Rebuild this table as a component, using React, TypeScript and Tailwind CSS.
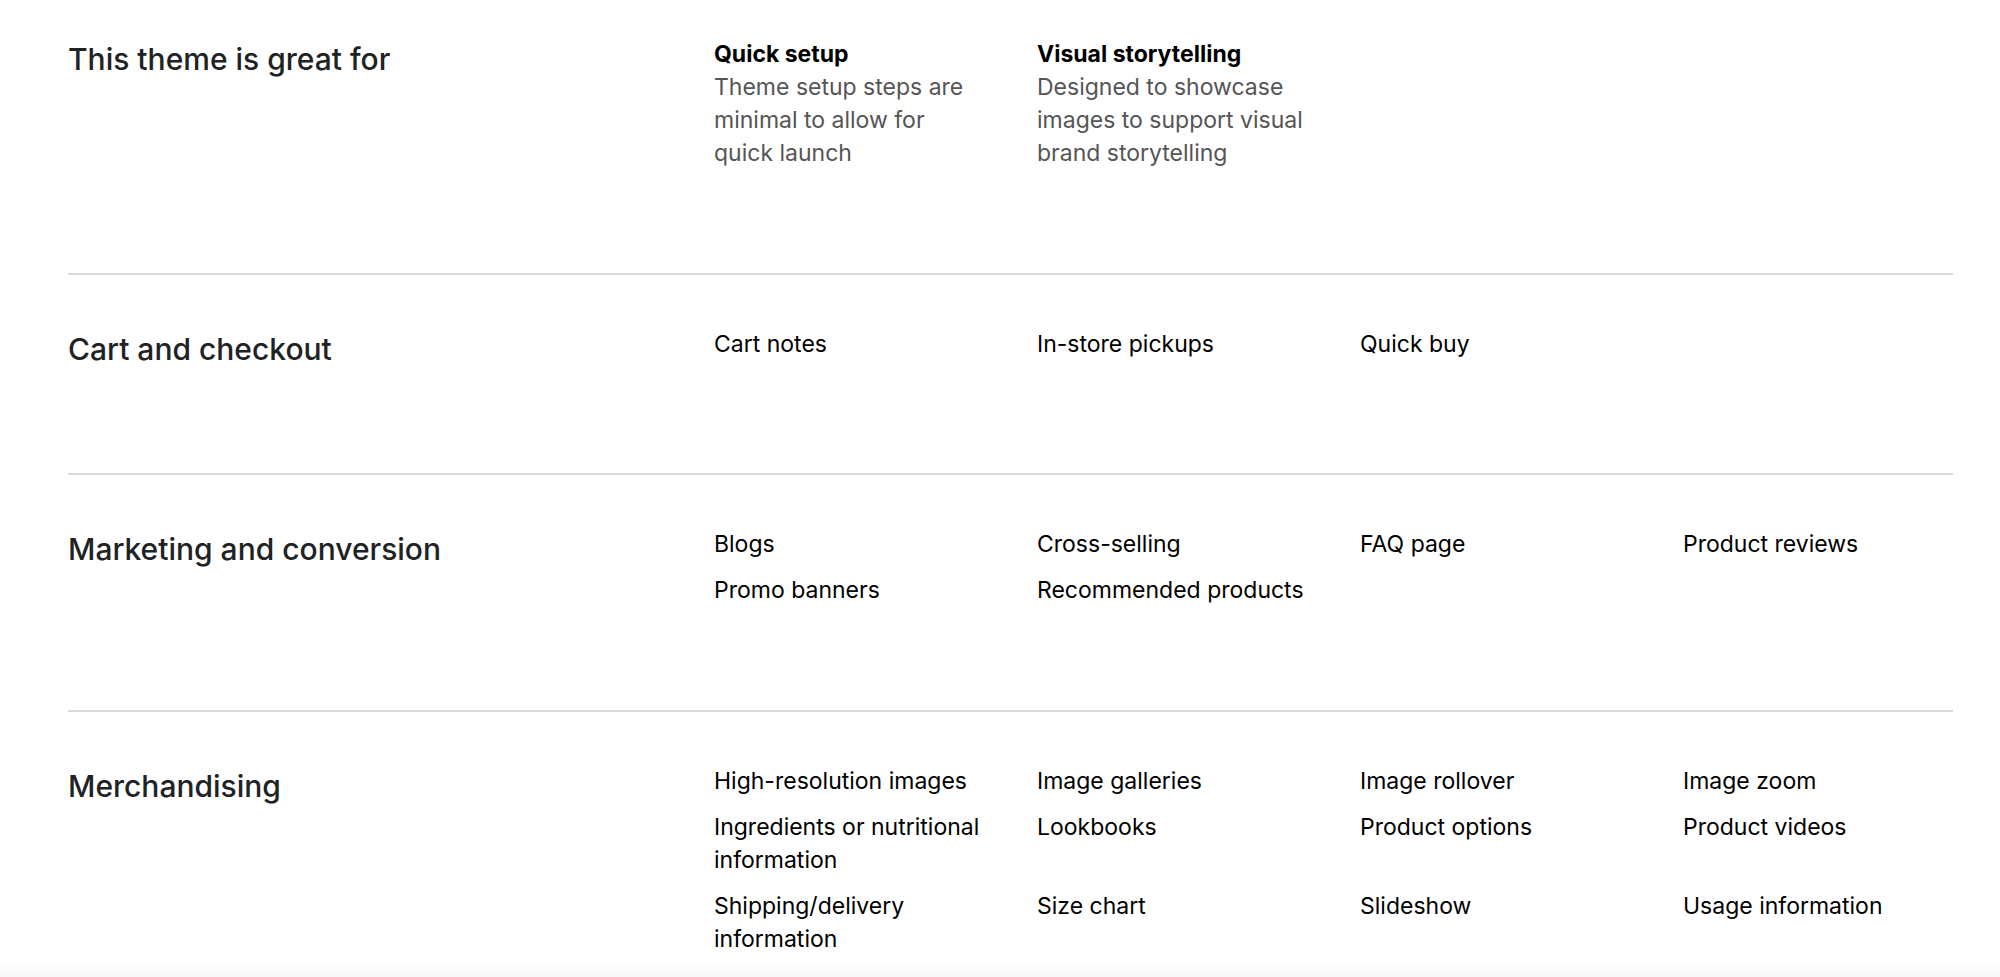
const highlights = [
  { title: 'Quick setup', text: 'Theme setup steps are minimal to allow for quick launch' },
  { title: 'Visual storytelling', text: 'Designed to showcase images to support visual brand storytelling' },
];

const sections = [
  { name: 'Cart and checkout', items: ['Cart notes', 'In-store pickups', 'Quick buy'] },
  {
    name: 'Marketing and conversion',
    items: ['Blogs', 'Cross-selling', 'FAQ page', 'Product reviews', 'Promo banners', 'Recommended products'],
  },
  {
    name: 'Merchandising',
    items: [
      'High-resolution images',
      'Image galleries',
      'Image rollover',
      'Image zoom',
      'Ingredients or nutritional information',
      'Lookbooks',
      'Product options',
      'Product videos',
      'Shipping/delivery information',
      'Size chart',
      'Slideshow',
      'Usage information',
    ],
  },
];

export default function App() {
  return (
    <div className="relative h-[977px] overflow-hidden bg-white font-['Inter','Liberation_Sans',sans-serif] antialiased">
      <div className="pl-[68px] pr-[47px]">
        {/* Great for */}
        <div className="flex border-b-2 border-[#d9d9d9] pt-[38px] pb-[103px]">
          <h2 className="w-[646px] shrink-0 text-[30px] font-medium leading-[42px] text-[#202223]">
            This theme is great for
          </h2>
          <div className="grid grid-cols-[repeat(4,276px)] gap-x-[47px]">
            {highlights.map((h) => (
              <div key={h.title} className="text-[23px] leading-[33px]">
                <h3 className="font-bold text-black">{h.title}</h3>
                <p className="text-[#555555]">{h.text}</p>
              </div>
            ))}
          </div>
        </div>

        {sections.map((section) => (
          <div key={section.name} className="flex border-b-2 border-[#d9d9d9] pt-[53px] pb-[103px]">
            <h2 className="w-[646px] shrink-0 text-[30px] font-medium leading-[42px] text-[#202223]">
              {section.name}
            </h2>
            <ul className="grid grid-cols-[repeat(4,276px)] gap-x-[47px] gap-y-[13px]">
              {section.items.map((item) => (
                <li key={item} className="text-[23px] leading-[33px] text-black">
                  {item}
                </li>
              ))}
            </ul>
          </div>
        ))}
      </div>

      {/* fade at the bottom edge */}
      <div className="absolute inset-x-0 bottom-0 h-[18px] bg-gradient-to-b from-white to-[#f7f7f7]" />
    </div>
  );
}
